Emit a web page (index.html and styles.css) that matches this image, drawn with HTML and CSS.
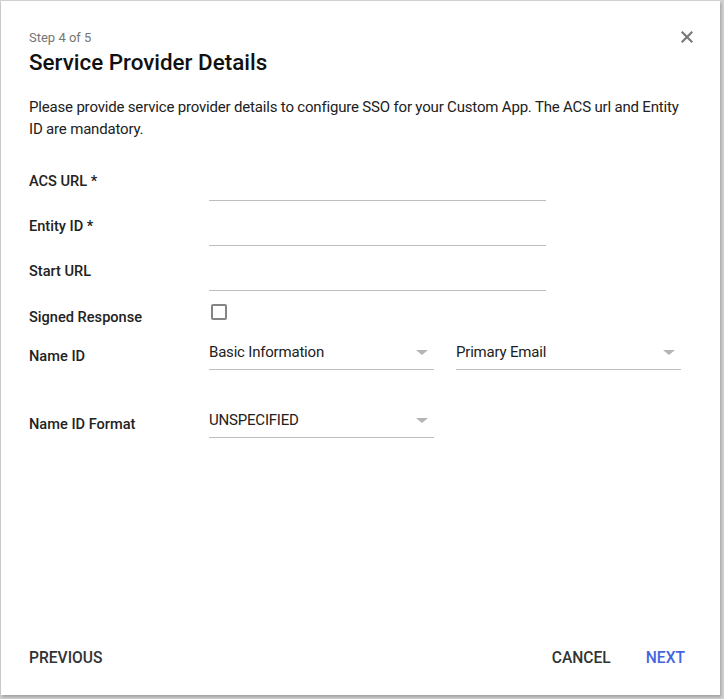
FILE: index.html
```html
<!DOCTYPE html>
<html>
<head>
<meta charset="utf-8">
<link rel="stylesheet" href="styles.css">
</head>
<body>
<div class="dialog">
  <button class="close" aria-label="Close">
    <svg width="12" height="12" viewBox="0 0 12 12"><path d="M1.5 1.5 L10.5 10.5 M10.5 1.5 L1.5 10.5" stroke="#7a7a7a" stroke-width="2.2" stroke-linecap="square"/></svg>
  </button>
  <div class="header">
    <div class="step">Step 4 of 5</div>
    <h1 class="title">Service Provider Details</h1>
  </div>
  <p class="desc">Please provide service provider details to configure SSO for your Custom App. The ACS url and Entity ID are mandatory.</p>
  <div class="form">
    <div class="row">
      <div class="label">ACS URL *</div>
      <div class="input"></div>
    </div>
    <div class="row">
      <div class="label">Entity ID *</div>
      <div class="input"></div>
    </div>
    <div class="row">
      <div class="label">Start URL</div>
      <div class="input"></div>
    </div>
    <div class="row row-check">
      <div class="label">Signed Response</div>
      <div class="checkbox"></div>
    </div>
    <div class="row row-select">
      <div class="label">Name ID</div>
      <div class="selects">
        <div class="select"><span>Basic Information</span><i class="arrow"></i></div>
        <div class="select"><span>Primary Email</span><i class="arrow"></i></div>
      </div>
    </div>
    <div class="row row-select row-format">
      <div class="label">Name ID Format</div>
      <div class="selects">
        <div class="select"><span>UNSPECIFIED</span><i class="arrow"></i></div>
      </div>
    </div>
  </div>
  <div class="footer">
    <button class="btn">PREVIOUS</button>
    <div class="right">
      <button class="btn">CANCEL</button>
      <button class="btn primary">NEXT</button>
    </div>
  </div>
</div>
</body>
</html>
```

FILE: styles.css
```css
html, body {
  margin: 0;
  padding: 0;
}
body {
  background: #d2d2d2;
  font-family: Roboto, "Liberation Sans", sans-serif;
  color: #212121;
  width: 724px;
  height: 699px;
  overflow: hidden;
  padding: 1px 0 0 1px;
  box-sizing: border-box;
}
.dialog {
  position: relative;
  width: 719px;
  height: 694px;
  background: #fff;
  box-shadow: 1px 2px 3px rgba(0,0,0,0.25);
  display: flex;
  flex-direction: column;
  box-sizing: border-box;
  padding: 29px 0 0 28px;
}
.close {
  position: absolute;
  top: 30px;
  right: 27px;
  width: 12px;
  height: 12px;
  padding: 0;
  border: 0;
  background: none;
  display: flex;
}
.step {
  font-size: 13px;
  line-height: 16px;
  color: #757575;
}
.title {
  margin: 2px 0 0;
  font-size: 22.4px;
  line-height: 28px;
  font-weight: 500;
  color: #111;
}
.desc {
  margin: 20px 0 0;
  width: 660px;
  font-size: 15px;
  line-height: 22px;
  letter-spacing: -0.18px;
  color: #212121;
}
.form {
  margin-top: 28px;
}
.row {
  display: flex;
  align-items: flex-start;
  margin-bottom: 12px;
}
.label {
  width: 180px;
  flex: none;
  font-size: 14.6px;
  font-weight: 500;
  line-height: 20px;
  padding-top: 3px;
  color: #222;
}
.input {
  width: 337px;
  height: 32px;
  border-bottom: 1px solid #bdbdbd;
}
.row-check {
  margin-bottom: 10px;
}
.row-check .label {
  padding-top: 4px;
}
.checkbox {
  width: 12px;
  height: 12px;
  border: 2px solid #858585;
  border-radius: 2px;
  margin: 1px 0 0 2px;
}
.row-select .label {
  padding-top: 9px;
}
.row-format {
  margin-top: 35px;
}
.selects {
  display: flex;
  gap: 22px;
}
.select {
  width: 225px;
  height: 32px;
  border-bottom: 1px solid #bdbdbd;
  display: flex;
  align-items: center;
  justify-content: space-between;
  font-size: 15px;
  letter-spacing: -0.2px;
}
.select span {
  line-height: 20px;
  margin-top: -2px;
}
.arrow {
  width: 0;
  height: 0;
  border-left: 6px solid transparent;
  border-right: 6px solid transparent;
  border-top: 5px solid #b5b5b5;
  margin-right: 6px;
  margin-top: -2px;
}
.footer {
  margin-top: auto;
  display: flex;
  justify-content: space-between;
  align-items: center;
  padding: 0 35px 27px 0;
}
.right {
  display: flex;
  gap: 35px;
}
.btn {
  font-family: Roboto, "Liberation Sans", sans-serif;
  font-size: 15.6px;
  font-weight: 500;
  line-height: 20px;
  color: #333;
  background: none;
  border: 0;
  padding: 0;
}
.btn.primary {
  color: #4466dd;
}
```
